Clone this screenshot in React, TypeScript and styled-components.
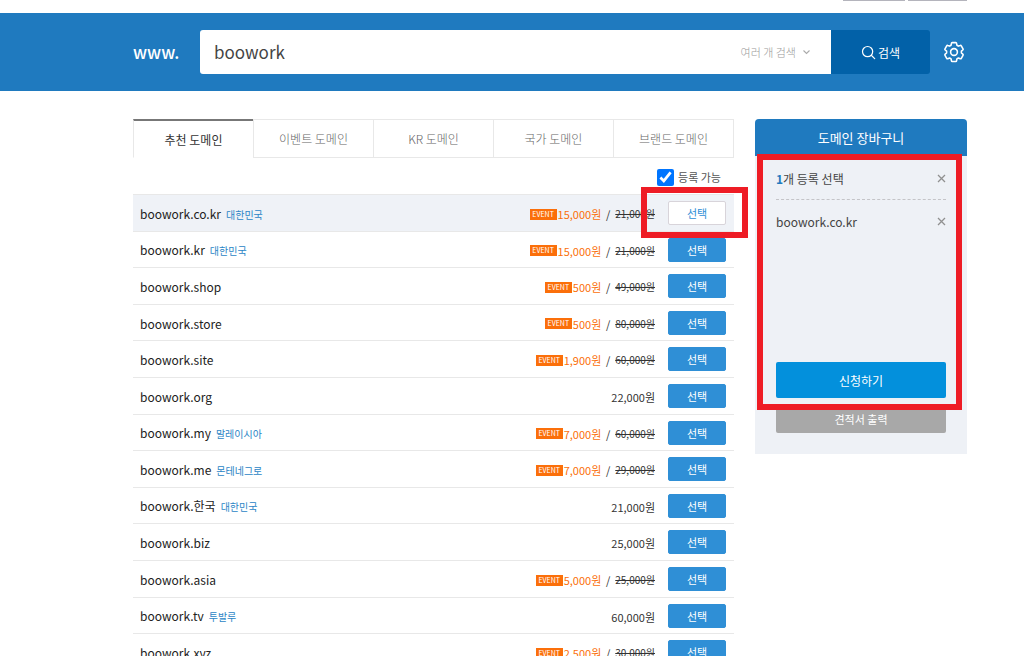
import React, { useState } from "react";
import styled, { createGlobalStyle } from "styled-components";

const GlobalStyle = createGlobalStyle`
  * { box-sizing: border-box; }
  body {
    margin: 0;
    background: #fff;
    color: #333;
    font-family: "Noto Sans CJK KR", "Noto Sans", sans-serif;
    font-size: 12px;
  }
  button, input { font-family: inherit; }
  button { cursor: pointer; padding: 0; border: 0; }
`;

const Page = styled.div`
  height: 100vh;
  overflow: hidden;
`;

const TopStrip = styled.div`
  height: 13px;
  padding-right: 57px;
  display: flex;
  justify-content: flex-end;
  gap: 3px;
`;

const TopMark = styled.span<{ $width: number }>`
  width: ${(p) => p.$width}px;
  height: 1px;
  background: #b4b4bc;
`;

const SearchBar = styled.header`
  height: 78px;
  padding: 0 57px 0 133px;
  background: #1f7abf;
  display: flex;
  align-items: center;
`;

const Prefix = styled.label`
  width: 67px;
  color: #fff;
  font-size: 17px;
  font-weight: 500;
  line-height: 24px;
`;

const SearchField = styled.div`
  flex: 1;
  height: 44px;
  padding: 0 20px 0 14px;
  background: #fff;
  border-radius: 3px 0 0 3px;
  display: flex;
  align-items: center;
`;

const SearchInput = styled.input`
  flex: 1;
  min-width: 0;
  padding: 0;
  border: 0;
  outline: 0;
  color: #444;
  font-size: 17px;
  line-height: 28px;
`;

const MultiButton = styled.button`
  background: none;
  color: #999;
  font-size: 11px;
  font-weight: 300;
  display: flex;
  align-items: center;
  gap: 6px;
`;

const SearchButton = styled.button`
  width: 99px;
  height: 44px;
  background: #0261a8;
  border-radius: 0 3px 3px 0;
  color: #fff;
  font-size: 12px;
  display: flex;
  align-items: center;
  justify-content: center;
  gap: 2px;
`;

const GearButton = styled.button`
  width: 22px;
  height: 22px;
  margin-left: 13px;
  margin-right: 2px;
  background: none;
`;

const Columns = styled.main`
  padding: 28px 57px 0 133px;
  display: flex;
  align-items: flex-start;
  gap: 21px;
`;

const Results = styled.section`
  flex: 1;
  min-width: 0;
`;

const Tabs = styled.div`
  display: flex;
`;

const Tab = styled.button<{ $active?: boolean }>`
  flex: 1;
  height: 39px;
  background: #fff;
  border: 1px solid #e8e8e8;
  border-right-width: 0;
  color: ${(p) => (p.$active ? "#333" : "#666")};
  font-size: 12px;
  font-weight: ${(p) => (p.$active ? 400 : 300)};
  ${(p) => p.$active && "border-top: 2px solid #777; border-bottom-color: #fff;"}
  &:last-child { border-right-width: 1px; }
`;

const Filter = styled.div`
  height: 36px;
  padding: 2px 13px 0 0;
  display: flex;
  align-items: center;
  justify-content: flex-end;
  gap: 4px;
`;

const FilterBox = styled.input`
  width: 17px;
  height: 17px;
  margin: 0;
  accent-color: #0075ff;
`;

const FilterLabel = styled.label`
  font-size: 11px;
  line-height: 16px;
  color: #555;
`;

const DomainTable = styled.table`
  width: 100%;
  border-collapse: separate;
  border-spacing: 0;
  border-top: 1px solid #e8e8e8;
`;

const DomainRow = styled.tr<{ $selected: boolean }>`
  height: 37px;
  background: ${(p) => (p.$selected ? "#eff2f7" : "#fff")};
  &:nth-child(5n + 2), &:nth-child(5n + 4) { height: 36px; }
`;

const Cell = styled.td`
  padding: 0;
  border-bottom: 1px solid #e8e8e8;
  vertical-align: middle;
`;

const NameCell = styled(Cell)`
  padding: 2px 0 0 7px;
  color: #222;
  font-size: 12px;
  line-height: 20px;
`;

const Country = styled.span`
  margin-left: 5px;
  color: #2b85c6;
  font-size: 10px;
`;

const PriceCell = styled(Cell)`
  width: 220px;
  padding-top: 2px;
`;

const Prices = styled.div`
  display: flex;
  align-items: center;
  justify-content: flex-end;
  font-size: 11px;
  line-height: 16px;
`;

const EventBadge = styled.span`
  width: 27px;
  height: 11px;
  margin-right: 1px;
  background: #fb6f0a;
  color: #fff;
  font-size: 7px;
  line-height: 11px;
  text-align: center;
`;

const SalePrice = styled.span`
  color: #fb6f0a;
`;

const Slash = styled.span`
  width: 14px;
  text-align: center;
`;

const OldPrice = styled.del`
  font-size: 10px;
  white-space: nowrap;
`;

const Price = styled.span`
  color: #333;
`;

const ActionCell = styled(Cell)`
  position: relative;
  width: 79px;
  padding-left: 13px;
`;

const SelectButton = styled.button<{ $selected: boolean }>`
  display: block;
  width: 58px;
  height: 24px;
  border: 1px solid ${(p) => (p.$selected ? "#d8d4da" : "#2f8fd6")};
  border-radius: 2px;
  background: ${(p) => (p.$selected ? "#fff" : "#2f8fd6")};
  color: ${(p) => (p.$selected ? "#2f8fd6" : "#fff")};
  font-size: 11px;
  line-height: 20px;
`;

const RowMarker = styled.div`
  position: absolute;
  top: -8px;
  right: -14px;
  width: 107px;
  height: 51px;
  border: 6px solid #ee1c25;
  pointer-events: none;
`;

const Cart = styled.aside`
  position: relative;
  width: 212px;
  min-height: 335px;
  background: #eef1f6;
  border-radius: 4px 4px 0 0;
  display: flex;
  flex-direction: column;
`;

const CartTitle = styled.h2`
  height: 37px;
  margin: 0;
  background: #1f7abf;
  border-radius: 4px 4px 0 0;
  color: #fff;
  font-size: 13px;
  font-weight: 400;
  line-height: 38px;
  text-align: center;
`;

const CartBody = styled.div`
  flex: 1;
  padding: 0 21px 21px;
  display: flex;
  flex-direction: column;
`;

const CartLine = styled.div<{ $head?: boolean }>`
  height: ${(p) => (p.$head ? 44 : 40)}px;
  padding-top: 2px;
  border-bottom: ${(p) => (p.$head ? "1px dashed #c4c4c8" : "0")};
  color: #444;
  font-size: 12px;
  display: flex;
  align-items: center;
  justify-content: space-between;
`;

const Count = styled.strong`
  color: #1f7abf;
  font-weight: 700;
`;

const RemoveButton = styled.button`
  width: 9px;
  height: 9px;
  background: none;
  display: flex;
`;

const CartActions = styled.div`
  margin-top: auto;
  display: flex;
  flex-direction: column;
  gap: 7px;
`;

const ApplyButton = styled.button`
  height: 36px;
  border-radius: 2px;
  background: #0390dc;
  color: #fff;
  font-size: 12px;
`;

const QuoteButton = styled.button`
  height: 28px;
  border-radius: 2px;
  background: #a8a8a8;
  color: #fff;
  font-size: 11px;
`;

const CartMarker = styled.div`
  position: absolute;
  top: 35px;
  left: 2px;
  right: 5px;
  height: 256px;
  border: 6px solid #ee1c25;
  pointer-events: none;
`;

const CrossIcon = () => (
  <svg width="9" height="9" viewBox="0 0 9 9" fill="none" stroke="#909090" strokeWidth="1.3">
    <path d="M1 1l7 7M8 1L1 8" />
  </svg>
);

const ChevronIcon = () => (
  <svg width="9" height="8" viewBox="0 0 9 8" fill="none" stroke="#aaa" strokeWidth="1.1">
    <path d="M1.5 2.5l3 3 3-3" />
  </svg>
);

const SearchIcon = () => (
  <svg width="15" height="15" viewBox="0 0 15 15" fill="none" stroke="#fff" strokeWidth="1.2" strokeLinecap="round">
    <circle cx="6.6" cy="6.6" r="5.1" />
    <path d="M10.3 10.3l3.4 3.3" />
  </svg>
);

const GearIcon = () => (
  <svg width="22" height="22" viewBox="0 0 22 22" fill="none" stroke="#fff" strokeWidth="1.6" strokeLinejoin="round">
    <path d="M9.2 1.6h3.6q.7 0 .8.8l.3 1.8 1.5.9 1.8-.7q.7-.3 1.1.4l1.7 3q.4.7-.2 1.2l-1.4 1.2v1.7l1.4 1.2q.6.5.2 1.2l-1.7 3q-.4.7-1.1.4l-1.8-.7-1.5.9-.3 1.8q-.1.8-.8.8H9.200q-.7 0-.8-.8l-.3-1.8-1.5-.9-1.8.7q-.7.3-1.100-.4l-1.700-3q-.4-.7.2-1.200l1.400-1.200v-1.700L2.200 9q-.6-.5-.2-1.200l1.700-3q.4-.7 1.100-.4l1.800.7 1.500-.9.3-1.800q.1-.8.8-.8z" />
    <circle cx="11" cy="11" r="3.4" />
  </svg>
);

type Domain = { name: string; country?: string; price: string; old?: string };

const domains: Domain[] = [
  { name: "boowork.co.kr", country: "대한민국", price: "15,000원", old: "21,000원" },
  { name: "boowork.kr", country: "대한민국", price: "15,000원", old: "21,000원" },
  { name: "boowork.shop", price: "500원", old: "49,000원" },
  { name: "boowork.store", price: "500원", old: "80,000원" },
  { name: "boowork.site", price: "1,900원", old: "60,000원" },
  { name: "boowork.org", price: "22,000원" },
  { name: "boowork.my", country: "말레이시아", price: "7,000원", old: "60,000원" },
  { name: "boowork.me", country: "몬테네그로", price: "7,000원", old: "29,000원" },
  { name: "boowork.한국", country: "대한민국", price: "21,000원" },
  { name: "boowork.biz", price: "25,000원" },
  { name: "boowork.asia", price: "5,000원", old: "25,000원" },
  { name: "boowork.tv", country: "투발루", price: "60,000원" },
  { name: "boowork.xyz", price: "2,500원", old: "30,000원" },
];

const tabs = ["추천 도메인", "이벤트 도메인", "KR 도메인", "국가 도메인", "브랜드 도메인"];

export default function App() {
  const [query, setQuery] = useState("boowork");
  const [tab, setTab] = useState(0);

  return (
    <Page>
      <GlobalStyle />
      <TopStrip>
        <TopMark $width={62} />
        <TopMark $width={59} />
      </TopStrip>
      <SearchBar>
        <Prefix htmlFor="domain">www.</Prefix>
        <SearchField>
          <SearchInput id="domain" value={query} onChange={(e) => setQuery(e.target.value)} />
          <MultiButton type="button">
            여러 개 검색
            <ChevronIcon />
          </MultiButton>
        </SearchField>
        <SearchButton type="button">
          <SearchIcon />
          검색
        </SearchButton>
        <GearButton type="button" aria-label="설정">
          <GearIcon />
        </GearButton>
      </SearchBar>
      <Columns>
        <Results>
          <Tabs role="tablist">
            {tabs.map((label, i) => (
              <Tab key={label} type="button" role="tab" aria-selected={i === tab} $active={i === tab} onClick={() => setTab(i)}>
                {label}
              </Tab>
            ))}
          </Tabs>
          <Filter>
            <FilterBox id="available" type="checkbox" defaultChecked />
            <FilterLabel htmlFor="available">등록 가능</FilterLabel>
          </Filter>
          <DomainTable>
            <tbody>
              {domains.map((d, i) => (
                <DomainRow key={d.name} $selected={i === 0}>
                  <NameCell>
                    {d.name}
                    {d.country && <Country>{d.country}</Country>}
                  </NameCell>
                  <PriceCell>
                    <Prices>
                      {d.old ? (
                        <>
                          <EventBadge>EVENT</EventBadge>
                          <SalePrice>{d.price}</SalePrice>
                          <Slash>/</Slash>
                          <OldPrice>{d.old}</OldPrice>
                        </>
                      ) : (
                        <Price>{d.price}</Price>
                      )}
                    </Prices>
                  </PriceCell>
                  <ActionCell>
                    <SelectButton type="button" $selected={i === 0}>선택</SelectButton>
                    {i === 0 && <RowMarker />}
                  </ActionCell>
                </DomainRow>
              ))}
            </tbody>
          </DomainTable>
        </Results>
        <Cart>
          <CartTitle>도메인 장바구니</CartTitle>
          <CartBody>
            <CartLine $head>
              <span><Count>1</Count>개 등록 선택</span>
              <RemoveButton type="button" aria-label="전체 삭제"><CrossIcon /></RemoveButton>
            </CartLine>
            <CartLine>
              boowork.co.kr
              <RemoveButton type="button" aria-label="삭제"><CrossIcon /></RemoveButton>
            </CartLine>
            <CartActions>
              <ApplyButton type="button">신청하기</ApplyButton>
              <QuoteButton type="button">견적서 출력</QuoteButton>
            </CartActions>
          </CartBody>
          <CartMarker />
        </Cart>
      </Columns>
    </Page>
  );
}
